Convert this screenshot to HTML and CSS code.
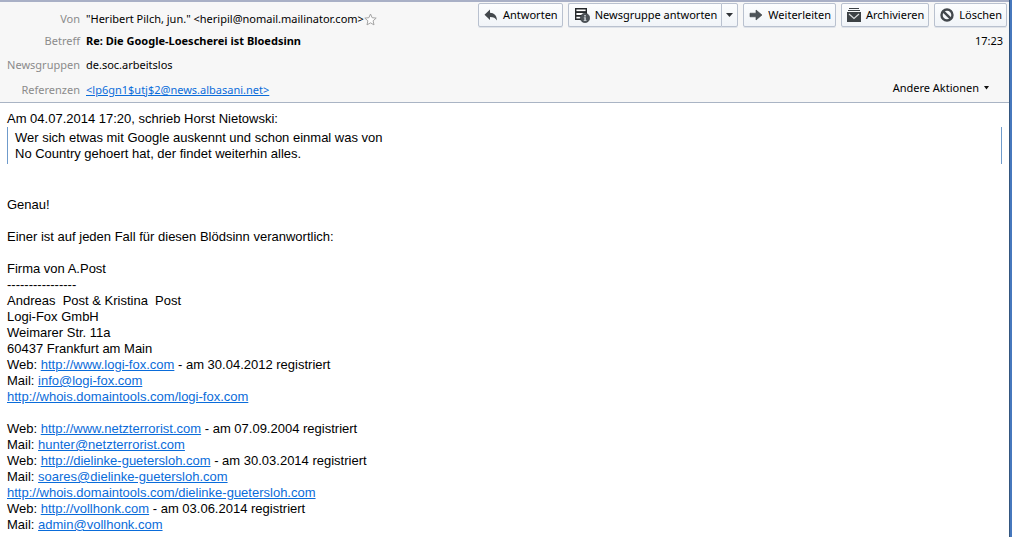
FILE: index.html
```
<!DOCTYPE html>
<html lang="de">
<head>
    <meta charset="UTF-8">
    <meta name="viewport" content="width=device-width, initial-scale=1.0">
    <title>Re: Die Google-Loescherei ist Bloedsinn</title>
    <link rel="stylesheet" href="styles.css">
</head>
<body>
    <div class="window">
        <header class="header">
            <dl class="fields">
                <dt>Von</dt>
                <dd>"Heribert Pilch, jun." &lt;heripil@nomail.mailinator.com&gt;<button class="star" type="button" aria-label="Kontakt hinzufügen"><svg width="13" height="13" viewBox="0 0 13 13"><path d="M6.5 1l1.6 3.7 4.1.4-3.1 2.7.9 4.1-3.5-2.1L3 11.900l.9-4.100L.8 5.100l4.100-.4z" fill="#fdfdfd" stroke="#a4a4a4"/></svg></button></dd>
                <dt>Betreff</dt>
                <dd class="subject">Re: Die Google-Loescherei ist Bloedsinn</dd>
                <dt>Newsgruppen</dt>
                <dd>de.soc.arbeitslos</dd>
                <dt>Referenzen</dt>
                <dd><a href="#">&lt;lp6gn1$utj$2@news.albasani.net&gt;</a></dd>
            </dl>
            <div class="side">
                <div class="toolbar">
                    <button class="btn" type="button">
                        <svg width="14" height="14" viewBox="0 0 14 14"><path d="M6 1.500v3.200c4 .2 6.800 2.400 7 7.800-1.500-2.700-3.500-3.600-7-3.600v3.100L.5 6.800z" fill="#43484d"/></svg>
                        Antworten
                    </button>
                    <div class="split">
                        <button class="btn" type="button">
                            <svg width="16" height="16" viewBox="0 0 16 16"><path d="M1.700 1.700h10.600v3.600H1.700zM1.700 5.300h10.600v3.500H1.700zM1.700 8.800h9v3.500h-9z" fill="#fff" stroke="#25282b" stroke-width="1.400"/><path d="M1 4.200h12v1.500H1zM1 8h10v1.500H1z" fill="#25282b"/><circle cx="11" cy="11" r="4.700" fill="#4d5358" stroke="#33383c" stroke-width=".6"/><path d="M10.200 8h1.700v1.500h-1.700zM9.800 10.200h2.100v2.900h.6v1H9.700v-1h.6v-1.900h-.5z" fill="#c3c8cc"/></svg>
                            Newsgruppe antworten
                        </button>
                        <button class="btn drop" type="button" aria-label="Weitere Antwortoptionen"><svg width="7" height="4" viewBox="0 0 7 4"><path d="M0 0h7L3.500 4z" fill="#2f3337"/></svg></button>
                    </div>
                    <button class="btn" type="button">
                        <svg width="14" height="14" viewBox="0 0 14 14"><path d="M1 5.200h6V2l6 5-6 5V8.800H1z" fill="#4d5358" stroke="#3a3f43" stroke-width=".6"/></svg>
                        Weiterleiten
                    </button>
                    <button class="btn" type="button">
                        <svg width="14" height="14" viewBox="0 0 14 14"><path d="M2 0h10v1H2zM1 2h12v1H1zM0 4h14v10H0z" fill="#3c4145"/><path d="M2 6l5 4.500L12 6" fill="none" stroke="#d8dbdd" stroke-width="1.200"/></svg>
                        Archivieren
                    </button>
                    <button class="btn" type="button">
                        <svg width="14" height="14" viewBox="0 0 14 14"><circle cx="7" cy="7" r="5.500" fill="none" stroke="#43484d" stroke-width="2.400"/><path d="M3.300 3.300l7.400 7.400" stroke="#43484d" stroke-width="2.400"/></svg>
                        Löschen
                    </button>
                </div>
                <time class="time">17:23</time>
                <button class="actions" type="button">Andere Aktionen <svg width="5" height="4" viewBox="0 0 5 4"><path d="M0 0h5L2.500 3.500z" fill="#111"/></svg></button>
            </div>
        </header>

        <main class="message">
            <p>Am 04.07.2014 17:20, schrieb Horst Nietowski:</p>
            <blockquote>
                Wer sich etwas mit Google auskennt und schon einmal was von<br>
                No Country gehoert hat, der findet weiterhin alles.
            </blockquote>
            <div class="text">
                Genau!<br>
                <br>
                Einer ist auf jeden Fall für diesen Blödsinn veranwortlich:<br>
                <br>
                Firma von A.Post<br>
                ----------------<br>
                Andreas&nbsp; Post &amp; Kristina&nbsp; Post<br>
                Logi-Fox GmbH<br>
                Weimarer Str. 11a<br>
                60437 Frankfurt am Main<br>
                Web: <a href="#">http://www.logi-fox.com</a> - am 30.04.2012 registriert<br>
                Mail: <a href="#">info@logi-fox.com</a><br>
                <a href="#">http://whois.domaintools.com/logi-fox.com</a><br>
                <br>
                Web: <a href="#">http://www.netzterrorist.com</a> - am 07.09.2004 registriert<br>
                Mail: <a href="#">hunter@netzterrorist.com</a><br>
                Web: <a href="#">http://dielinke-guetersloh.com</a> - am 30.03.2014 registriert<br>
                Mail: <a href="#">soares@dielinke-guetersloh.com</a><br>
                <a href="#">http://whois.domaintools.com/dielinke-guetersloh.com</a><br>
                Web: <a href="#">http://vollhonk.com</a> - am 03.06.2014 registriert<br>
                Mail: <a href="#">admin@vollhonk.com</a>
            </div>
        </main>
    </div>
</body>
</html>
```
FILE: styles.css
```
* {
    box-sizing: border-box;
}
body {
    margin: 0;
    background: #fff;
    color: #000;
    font-family: "Liberation Sans", Arial, sans-serif;
    font-size: 13px;
    line-height: 16px;
}
a {
    color: #0a6cda;
}
button {
    font: inherit;
    color: inherit;
    cursor: pointer;
}
.window {
    min-height: 100vh;
    border-right: 2px solid #4778bd;
    box-shadow: inset -1px 0 0 #34567f;
}
.header {
    display: flex;
    justify-content: space-between;
    margin-right: 1px;
    background: #f7f7f7;
    border-top: 2px solid #a9b0c6;
    border-bottom: 1px solid #a9b4c4;
    font-family: "Noto Sans", "Segoe UI", sans-serif;
    font-size: 11px;
}
.fields {
    display: grid;
    grid-template-columns: 80px auto;
    grid-template-rows: 22px 22px 26px 24px;
    align-items: center;
    column-gap: 6px;
    margin: 0;
    padding: 6px 0 0;
    white-space: nowrap;
}
.fields dt {
    color: #8b8b8b;
    text-align: right;
}
.fields dd {
    display: flex;
    align-items: center;
    margin: 0;
}
.fields .subject {
    font-weight: bold;
}
.star {
    display: flex;
    padding: 0;
    background: none;
    border: none;
}
.side {
    display: flex;
    flex-direction: column;
    align-items: flex-end;
    padding: 1px 2px 0 0;
}
.toolbar {
    display: flex;
    gap: 5px;
}
.btn {
    display: flex;
    align-items: center;
    gap: 5px;
    height: 24px;
    padding: 0 4px 0 5px;
    background: linear-gradient(#fcfdfe, #f1f4f8);
    border: 1px solid #b9c1cf;
    border-radius: 2px;
    box-shadow: 0 1px 0 #dfe3e9;
    white-space: nowrap;
}
.btn:hover {
    background: #eef3f9;
}
.split {
    display: flex;
}
.split .btn:first-child {
    border-right: none;
    border-radius: 2px 0 0 2px;
}
.split .drop {
    padding: 0 4px;
    border-radius: 0 2px 2px 0;
}
.time {
    margin: 6px 4px 0 0;
}
.actions {
    display: flex;
    align-items: center;
    gap: 5px;
    margin: 31px 18px 0 0;
    padding: 0;
    background: none;
    border: none;
}
.message {
    padding: 8px 8px 4px 7px;
}
.message p {
    margin: 0;
}
blockquote {
    margin: 0 0 33px;
    padding: 3px 7px 2px;
    border: solid #6f9bcb;
    border-width: 0 1px;
}
```
